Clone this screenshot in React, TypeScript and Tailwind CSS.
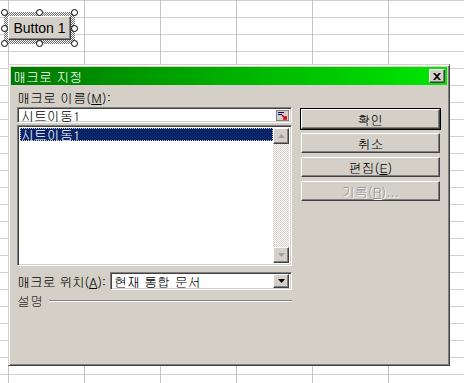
import React from "react";

const kr = "font-['Gulim','Noto_Sans_CJK_KR','Noto_Sans',sans-serif]";

const raised =
  "border border-t-white border-l-white border-r-[#404040] border-b-[#404040] shadow-[inset_-1px_-1px_#808080]";
const sunken =
  "border border-t-[#808080] border-l-[#808080] border-r-white border-b-white shadow-[inset_1px_1px_#404040,inset_-1px_-1px_#d4d0c8]";

const Arrow = ({ up, color }: { up?: boolean; color: string }) => (
  <svg width="7" height="4" viewBox="0 0 7 4" className={up ? "" : "rotate-180"}>
    <path d="M3.5 0 L7 4 L0 4 Z" fill={color} />
  </svg>
);

const ScrollBtn = ({ up, color }: { up?: boolean; color: string }) => (
  <div className={`flex h-4 w-4 items-center justify-center bg-[#d4d0c8] ${raised}`}>
    <Arrow up={up} color={color} />
  </div>
);

const Handle = ({ className }: { className: string }) => (
  <span className={`absolute h-[7px] w-[7px] rounded-full border border-black bg-white ${className}`} />
);

const DlgButton = ({
  children,
  isDefault,
  disabled,
}: {
  children: React.ReactNode;
  isDefault?: boolean;
  disabled?: boolean;
}) => (
  <div
    className={`flex h-[20px] w-[139px] items-center justify-center bg-[#d4d0c8] text-[13px] leading-none ${
      isDefault ? "outline outline-1 outline-black" : ""
    } ${raised} ${disabled ? "text-[#909090] [text-shadow:1px_1px_#fff]" : "text-black"}`}
  >
    {children}
  </div>
);

export default function App() {
  return (
    <div
      className={`relative h-[383px] w-[464px] overflow-hidden bg-white bg-[linear-gradient(to_right,#c4c4c4_1px,transparent_1px),linear-gradient(to_bottom,#d0d0d0_1px,transparent_1px)] bg-[size:76px_17px] bg-[position:8px_0px] ${kr}`}
    >
      {/* Form button being edited */}
      <div className="absolute left-[4px] top-[12px] h-[32px] w-[71px] bg-[repeating-conic-gradient(#6a6a6a_0_25%,#ffffff_0_50%)] bg-[size:2px_2px] p-[4px]">
        <div className={`flex h-full w-full items-center justify-center bg-[#d4d0c8] font-['Liberation_Sans',sans-serif] text-[14px] text-black ${raised}`}>
          Button 1
        </div>
        <Handle className="-left-[3px] -top-[3px]" />
        <Handle className="left-[32px] -top-[3px]" />
        <Handle className="-right-[3px] -top-[3px]" />
        <Handle className="-left-[3px] top-[13px]" />
        <Handle className="-right-[3px] top-[13px]" />
        <Handle className="-left-[3px] -bottom-[3px]" />
        <Handle className="left-[32px] -bottom-[3px]" />
        <Handle className="-right-[3px] -bottom-[3px]" />
      </div>

      {/* Assign macro dialog */}
      <div className="absolute left-[8px] top-[64px] flex h-[302px] w-[442px] flex-col border border-t-[#d4d0c8] border-l-[#d4d0c8] border-r-[#404040] border-b-[#404040] bg-[#d4d0c8] p-[2px] shadow-[inset_1px_1px_#fff,inset_-1px_-1px_#808080]">
        <div className="flex h-[18px] items-center justify-between bg-gradient-to-r from-[#007800] via-[#00b000] to-[#00e800] pl-[2px] pr-[2px]">
          <span className="text-[13px] leading-none text-white">매크로 지정</span>
          <div className={`flex h-[14px] w-[16px] items-center justify-center bg-[#d4d0c8] ${raised}`}>
            <svg width="8" height="7" viewBox="0 0 8 7">
              <path d="M0 0h2l2 2 2-2h2L5 3.5 8 7H6L4 5 2 7H0l3-3.5z" fill="#000" />
            </svg>
          </div>
        </div>

        <div className="flex gap-[9px] pl-[6px] pt-[6px]">
          {/* left column */}
          <div className="flex w-[275px] flex-col">
            <div className="h-[14px] text-[13px] leading-[14px] text-black">
              매크로 이름(<span className="underline">M</span>):
            </div>
            <div className={`mt-[2px] flex h-[16px] items-center justify-between bg-white pl-[3px] pr-[2px] ${sunken}`}>
              <span className="text-[13px] leading-none text-black">시트이동1</span>
              <svg width="13" height="11" viewBox="0 0 13 11">
                <rect x="0.5" y="0.5" width="12" height="10" fill="#d4d0c8" stroke="#808080" />
                <path d="M2 2.5h6M2 4.5h4" stroke="#000080" strokeWidth="1" />
                <path d="M6 5l4 4M10 6v3H7" stroke="#e00000" strokeWidth="1.6" fill="none" />
              </svg>
            </div>
            <div className={`mt-[2px] flex h-[141px] bg-white p-[2px] ${sunken}`}>
              <div className="flex-1">
                <div className="flex h-[13px] items-center bg-[#0a246a] pl-[1px] text-[13px] leading-none text-white outline-1 outline-dotted outline-[#d4d0c8] -outline-offset-1">
                  시트이동1
                </div>
              </div>
              <div className="flex w-[16px] flex-col justify-between bg-[repeating-conic-gradient(#d4d0c8_0_25%,#ffffff_0_50%)] bg-[size:2px_2px]">
                <ScrollBtn up color="#a0a0a0" />
                <ScrollBtn color="#a0a0a0" />
              </div>
            </div>
            <div className="mt-[6px] flex items-center justify-between">
              <span className="whitespace-nowrap text-[13px] leading-none tracking-[-0.3px] text-black">
                매크로 위치(<span className="underline">A</span>):
              </span>
              <div className={`flex h-[18px] w-[182px] shrink-0 items-center justify-between bg-white pl-[3px] pr-[2px] ${sunken}`}>
                <span className="text-[13px] leading-none text-black">현재 통합 문서</span>
                <div className={`flex h-[14px] w-[16px] items-center justify-center bg-[#d4d0c8] ${raised}`}>
                  <Arrow color="#000" />
                </div>
              </div>
            </div>
            <div className="mt-[4px] flex items-center gap-[6px]">
              <span className="text-[13px] leading-none text-[#333]">설명</span>
              <div className="flex-1 border-t border-t-[#808080] border-b border-b-white" />
            </div>
          </div>

          {/* right column */}
          <div className="flex flex-col gap-[4px] pt-[18px]">
            <DlgButton isDefault>확인</DlgButton>
            <DlgButton>취소</DlgButton>
            <DlgButton>
              편집(<span className="underline">E</span>)
            </DlgButton>
            <DlgButton disabled>
              기록(<span className="underline">R</span>)...
            </DlgButton>
          </div>
        </div>
      </div>
    </div>
  );
}
